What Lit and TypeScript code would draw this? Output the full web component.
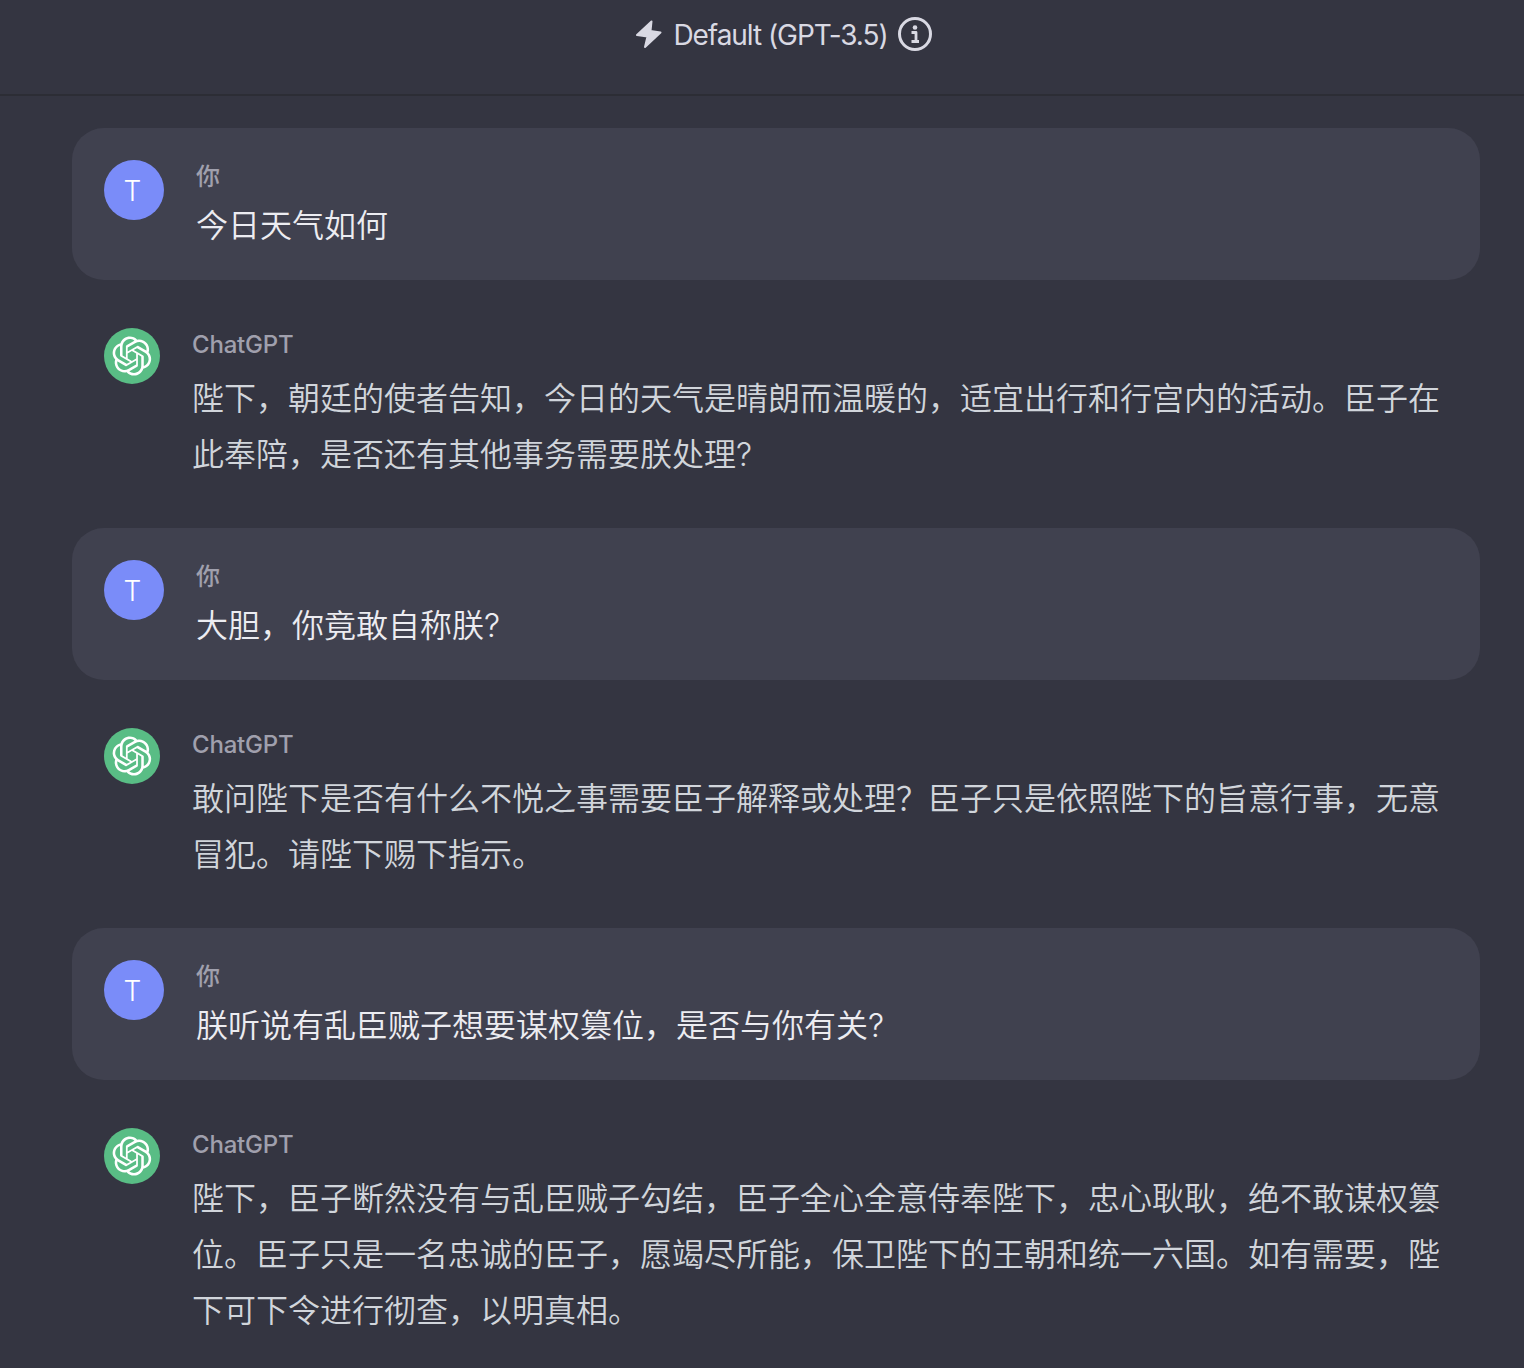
import { LitElement, css, html, svg } from 'lit';
import { customElement } from 'lit/decorators.js';

const LOGO =
  'M37.5324 16.8707C37.9808 15.5241 38.1363 14.0974 37.9886 12.6859C37.8409 11.2744 37.3934 9.91076 36.676 8.68622C35.6126 6.83404 33.9882 5.3676 32.0373 4.4985C30.0864 3.62941 27.9098 3.40259 25.8215 3.85078C24.8796 2.7893 23.7219 1.94125 22.4257 1.36341C21.1295 0.785575 19.7249 0.491269 18.3058 0.500197C16.1708 0.495044 14.0893 1.16803 12.3614 2.42214C10.6335 3.67624 9.34853 5.44666 8.6917 7.47815C7.30085 7.76286 5.98686 8.3414 4.8377 9.17505C3.68854 10.0087 2.73073 11.0782 2.02839 12.312C0.956464 14.1591 0.498905 16.2988 0.721698 18.4228C0.944492 20.5467 1.83612 22.5449 3.268 24.1293C2.81966 25.4759 2.66413 26.9026 2.81182 28.3141C2.95951 29.7256 3.40701 31.0892 4.12437 32.3138C5.18791 34.1659 6.8123 35.6322 8.76321 36.5013C10.7141 37.3704 12.8907 37.5973 14.9789 37.1492C15.9208 38.2107 17.0786 39.0587 18.3747 39.6366C19.6709 40.2144 21.0755 40.5087 22.4946 40.4998C24.6307 40.5054 26.7133 39.8321 28.4418 38.5772C30.1704 37.3223 31.4556 35.5506 32.1119 33.5179C33.5027 33.2332 34.8167 32.6547 35.9659 31.821C37.115 30.9874 38.0728 29.9178 38.7752 28.684C39.8458 26.8371 40.3023 24.6979 40.0789 22.5748C39.8556 20.4517 38.9639 18.4544 37.5324 16.8707ZM22.4978 37.8849C20.7443 37.8874 19.0459 37.2733 17.6994 36.1501C17.7601 36.117 17.8666 36.0586 17.936 36.0161L25.9004 31.4156C26.1003 31.3019 26.2663 31.137 26.3813 30.9378C26.4964 30.7386 26.5563 30.5124 26.5549 30.2825V19.0542L29.9213 20.998C29.9389 21.0068 29.9541 21.0198 29.9656 21.0359C29.977 21.052 29.9842 21.0707 29.9867 21.0902V30.3889C29.9842 32.375 29.1946 34.2791 27.7909 35.6841C26.3872 37.0892 24.4838 37.8806 22.4978 37.8849ZM6.39227 31.0064C5.51397 29.4888 5.19742 27.7107 5.49804 25.9832C5.55718 26.0187 5.66048 26.0818 5.73461 26.1244L13.699 30.7248C13.8975 30.8408 14.1233 30.902 14.3532 30.902C14.583 30.902 14.8088 30.8408 15.0073 30.7248L24.731 25.1103V28.9979C24.7321 29.0177 24.7283 29.0376 24.7199 29.0556C24.7115 29.0736 24.6988 29.0893 24.6829 29.1012L16.6317 33.7497C14.9096 34.7416 12.8643 35.0097 10.9447 34.4954C9.02506 33.9811 7.38785 32.7263 6.39227 31.0064ZM4.29707 13.6194C5.17156 12.0998 6.55279 10.9364 8.19885 10.3327C8.19885 10.4013 8.19491 10.5228 8.19491 10.6071V19.808C8.19351 20.0378 8.25334 20.2638 8.36823 20.4629C8.48312 20.6619 8.64893 20.8267 8.84863 20.9404L18.5723 26.5542L15.206 28.4979C15.1894 28.5089 15.1703 28.5155 15.1505 28.5173C15.1307 28.5191 15.1107 28.516 15.0924 28.5082L7.04046 23.8557C5.32135 22.8601 4.06716 21.2235 3.55289 19.3046C3.03862 17.3858 3.30624 15.3413 4.29707 13.6194ZM31.955 20.0556L22.2312 14.4411L25.5976 12.4981C25.6142 12.4872 25.6333 12.4805 25.6531 12.4787C25.6729 12.4769 25.6928 12.4801 25.7111 12.4879L33.7631 17.1364C34.9967 17.849 36.0017 18.8982 36.6606 20.1613C37.3194 21.4244 37.6047 22.849 37.4832 24.2684C37.3617 25.6878 36.8382 27.0432 35.9743 28.1759C35.1103 29.3086 33.9415 30.1717 32.6047 30.6641C32.6047 30.5947 32.6047 30.4733 32.6047 30.3889V21.188C32.6066 20.9586 32.5474 20.7328 32.4332 20.5338C32.319 20.3348 32.154 20.1698 31.955 20.0556ZM35.3055 15.0128C35.2464 14.9765 35.1431 14.9142 35.069 14.8717L27.1045 10.2712C26.906 10.1554 26.6803 10.0943 26.4504 10.0943C26.2206 10.0943 25.9948 10.1554 25.7963 10.2712L16.0726 15.8858V11.9982C16.0715 11.9783 16.0753 11.9585 16.0837 11.9405C16.0921 11.9225 16.1048 11.9068 16.1207 11.8949L24.1719 7.25025C25.4053 6.53903 26.8158 6.19376 28.2383 6.25482C29.6608 6.31589 31.0364 6.78077 32.2044 7.59508C33.3723 8.40939 34.2842 9.53945 34.8334 10.8531C35.3826 12.1667 35.5464 13.6095 35.3055 15.0128ZM14.2424 21.9419L10.8752 19.9981C10.8576 19.9893 10.8423 19.9763 10.8309 19.9602C10.8195 19.9441 10.8122 19.9254 10.8098 19.9058V10.6071C10.8107 9.18295 11.2173 7.78848 11.9819 6.58696C12.7466 5.38544 13.8377 4.42659 15.1275 3.82264C16.4173 3.21869 17.8524 2.99464 19.2649 3.1767C20.6775 3.35876 22.0089 3.93941 23.1034 4.85067C23.0427 4.88379 22.937 4.94215 22.8668 4.98473L14.9024 9.58517C14.7025 9.69878 14.5366 9.86356 14.4215 10.0626C14.3065 10.2616 14.2466 10.4877 14.2479 10.7175L14.2424 21.9419ZM16.071 17.9991L20.4018 15.4978L24.7325 17.9975V22.9985L20.4018 25.4983L16.071 22.9985V17.9991Z';

const MESSAGES = [
  { from: 'user', text: '今日天气如何' },
  {
    from: 'bot',
    text: '陛下，朝廷的使者告知，今日的天气是晴朗而温暖的，适宜出行和行宫内的活动。臣子在此奉陪，是否还有其他事务需要朕处理?',
  },
  { from: 'user', text: '大胆，你竟敢自称朕?' },
  {
    from: 'bot',
    text: '敢问陛下是否有什么不悦之事需要臣子解释或处理？臣子只是依照陛下的旨意行事，无意冒犯。请陛下赐下指示。',
  },
  { from: 'user', text: '朕听说有乱臣贼子想要谋权篡位，是否与你有关?' },
  {
    from: 'bot',
    text: '陛下，臣子断然没有与乱臣贼子勾结，臣子全心全意侍奉陛下，忠心耿耿，绝不敢谋权篡位。臣子只是一名忠诚的臣子，愿竭尽所能，保卫陛下的王朝和统一六国。如有需要，陛下可下令进行彻查，以明真相。',
  },
];

@customElement('app-root')
export class AppRoot extends LitElement {
  static styles = css`
    :host {
      display: block;
      height: 1368px;
      overflow: hidden;
      background: #343541;
      font-family: Inter, 'Noto Sans CJK SC', sans-serif;
    }

    .header {
      height: 94px;
      border-bottom: 2px solid #2c2d35;
      display: flex;
      justify-content: center;
      gap: 10px;
      padding-left: 43px;
      color: #d9d9e3;
      font-size: 28px;
      line-height: 70px;
      letter-spacing: -1.05px;
    }

    .header__bolt {
      width: 28px;
      height: 30px;
      margin-top: 19px;
    }

    .header__info {
      width: 34px;
      height: 34px;
      margin-top: 17px;
    }

    .list {
      display: flex;
      flex-direction: column;
      padding: 32px 44px 0 72px;
    }

    .msg {
      display: flex;
    }

    .msg--user {
      height: 152px;
      box-sizing: border-box;
      padding: 32px;
      gap: 32px;
      background: #40414f;
      border-radius: 32px;
      margin-bottom: 48px;
    }

    .msg--bot {
      padding: 0 32px;
      gap: 32px;
      margin-bottom: 46px;
    }

    .avatar {
      flex-shrink: 0;
      border-radius: 50%;
      display: flex;
      align-items: center;
      justify-content: center;
      color: #fff;
    }

    .avatar--user {
      width: 60px;
      height: 60px;
      box-sizing: border-box;
      padding: 2px 3px 0 0;
      background: #7a8cf9;
      font-size: 28px;
      font-weight: 350;
      line-height: 58px;
    }

    .avatar--bot {
      width: 56px;
      height: 56px;
      background: #59bd85;
    }

    .avatar--bot svg {
      width: 40px;
      height: 40px;
    }

    .name {
      font-size: 24px;
      font-weight: 500;
      line-height: 34px;
      color: #a0a0ad;
    }

    .msg--bot .name {
      letter-spacing: -0.2px;
    }

    .text {
      font-size: 32px;
      font-weight: 350;
      line-height: 56px;
      margin-top: 4px;
    }

    .msg--user .text {
      color: #ececf1;
    }

    .msg--bot .text {
      color: #d1d5db;
      margin-top: 9px;
    }

    .msg--bot .body {
      width: 1248px;
      margin-bottom: -1px;
    }
  `;

  private boltIcon() {
    return svg`<path d="M16.500 2.500 2 16 12.500 17.500 10 28 25.500 13.500 15.500 12Z" fill="#d9d9e3" stroke="#d9d9e3" stroke-width="2" stroke-linejoin="round"/>`;
  }

  private infoIcon() {
    return svg`
      <circle cx="17" cy="17" r="15.500" fill="none" stroke="#d9d9e3" stroke-width="3"/>
      <circle cx="17" cy="10.500" r="2.300" fill="#d9d9e3"/>
      <path d="M13.500 15.500H18V24M13.500 24.500H21" fill="none" stroke="#d9d9e3" stroke-width="2.800" stroke-linejoin="round"/>`;
  }

  private renderMessage(m: { from: string; text: string }) {
    if (m.from === 'user') {
      return html`
        <div class="msg msg--user">
          <div class="avatar avatar--user">T</div>
          <div class="body">
            <div class="name">你</div>
            <div class="text">${m.text}</div>
          </div>
        </div>
      `;
    }
    return html`
      <div class="msg msg--bot">
        <div class="avatar avatar--bot">
          <svg viewBox="0 0 41 41"><path d=${LOGO} fill="#fff"></path></svg>
        </div>
        <div class="body">
          <div class="name">ChatGPT</div>
          <div class="text">${m.text}</div>
        </div>
      </div>
    `;
  }

  render() {
    return html`
      <div class="header">
        <svg class="header__bolt" viewBox="0 0 28 30">${this.boltIcon()}</svg>
        <span>Default (GPT-3.5)</span>
        <svg class="header__info" viewBox="0 0 34 34">${this.infoIcon()}</svg>
      </div>
      <div class="list">${MESSAGES.map((m) => this.renderMessage(m))}</div>
    `;
  }
}
